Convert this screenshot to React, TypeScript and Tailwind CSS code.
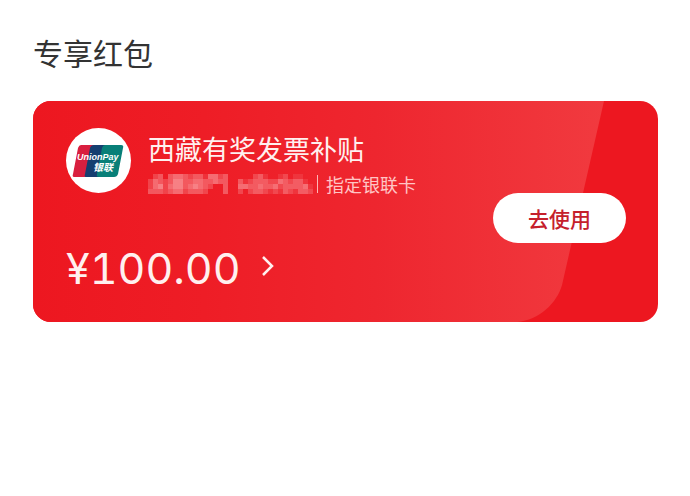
import React from 'react';

// Opacity of each mosaic cell in tenths, one string for each row.
const mosaicRows = [
  '023034432331442300000231001201100',
  '243235533443343300312333224323310',
  '245245534543200300443343342333341',
  '333234423332000300202332121321332',
];

function CardPattern() {
  return (
    <svg
      className="absolute inset-0 -z-10 h-full w-full"
      viewBox="0 0 625 221"
      preserveAspectRatio="xMaxYMid slice"
      aria-hidden="true"
    >
      <defs>
        <linearGradient id="sheen" x1="0" y1="0" x2="1" y2="0">
          <stop offset="0" stopColor="#ed1720" />
          <stop offset="0.3" stopColor="#ee1d26" />
          <stop offset="0.6" stopColor="#ee262f" />
          <stop offset="1" stopColor="#f13a3f" />
        </linearGradient>
      </defs>
      <path
        d="M0 0H571L529 184C524 202 506 219 484 221H0Z"
        fill="url(#sheen)"
      />
    </svg>
  );
}

function UnionPayLogo() {
  return (
    <svg
      className="size-[65px] shrink-0 rounded-full bg-white"
      viewBox="0 0 65 65"
      role="img"
      aria-label="UnionPay 银联"
    >
      <path d="M15 17H31L25 49H8Q6 49 7 46L12 20Q13 17 15 17Z" fill="#d91f3f" />
      <path d="M28 17H44L37 49H20Q18 49 19 46L24 20Q25 17 28 17Z" fill="#153e70" />
      <path d="M39 17H55Q58 17 57 20L52 46Q51 49 48 49H33Q30 49 31 46L36 20Q37 17 39 17Z" fill="#087f78" />
      <text
        x="11"
        y="32"
        fill="white"
        className="font-['Liberation_Sans',sans-serif] text-[9px] font-bold italic"
      >
        UnionPay
      </text>
      <text
        x="27"
        y="43"
        fill="white"
        className="font-['Noto_Sans_CJK_SC',sans-serif] text-[10px] font-bold italic"
      >
        银联
      </text>
    </svg>
  );
}

function Mosaic() {
  return (
    <svg
      className="h-5 w-[165px] shrink-0"
      viewBox="0 0 165 20"
      shapeRendering="crispEdges"
      aria-hidden="true"
    >
      {mosaicRows.map((row, y) =>
        row.split('').map((level, x) => (
          <rect
            key={`${x}-${y}`}
            x={x * 5}
            y={y * 5}
            width="5"
            height="5"
            fill="#ffe4e4"
            fillOpacity={Number(level) / 10}
          />
        )),
      )}
    </svg>
  );
}

export default function App() {
  return (
    <main className="min-h-screen bg-white px-8 pt-8 pl-[33px] font-['Noto_Sans_CJK_SC',sans-serif]">
      <h1 className="text-[30px] leading-[40px] font-normal text-[#333]">专享红包</h1>
      <section className="relative isolate mt-[29px] flex items-center justify-between overflow-hidden rounded-[18px] bg-[#ed1720] pt-[27px] pr-8 pb-[22px] pl-[33px] text-white">
        <CardPattern />
        <div>
          <div className="flex items-start gap-[17px]">
            <UnionPayLogo />
            <div>
              <h2 className="text-[27px] leading-[42px] font-normal text-[#fff0ef]">西藏有奖发票补贴</h2>
              <p className="flex items-center text-[18px] leading-7 text-[#ffc5c5]">
                <Mosaic />
                <span className="mr-2 ml-1 h-[18px] w-px bg-[#ffb5b5]" />
                指定银联卡
              </p>
            </div>
          </div>
          <a href="#details" className="mt-[38px] flex items-center gap-5 text-[#fff0ef]">
            <span className="font-['Inter',sans-serif] text-[43px] leading-[64px] font-normal tabular-nums">
              ¥100.00
            </span>
            <svg className="-mt-1 h-6 w-4" viewBox="0 0 16 24" fill="none" aria-hidden="true">
              <path d="M2 3L11 12L2 21" stroke="currentColor" strokeWidth="2.5" />
            </svg>
          </a>
        </div>
        <button
          type="button"
          className="mt-2 h-[50px] w-[133px] shrink-0 rounded-full bg-white text-[21px] leading-8 font-medium text-[#c5202b]"
        >
          去使用
        </button>
      </section>
    </main>
  );
}
